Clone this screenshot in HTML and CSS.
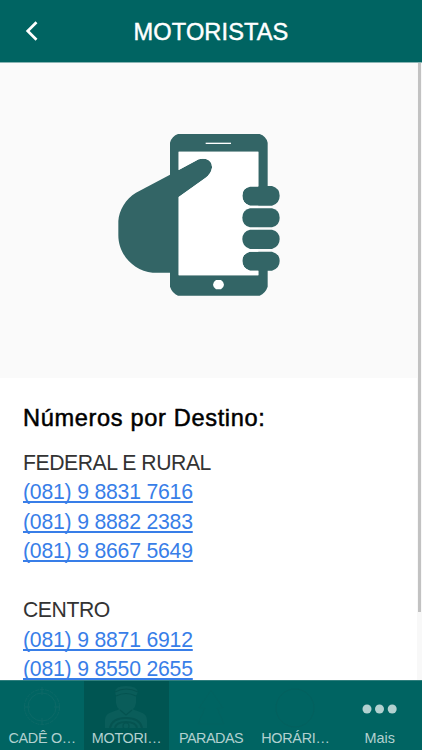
FILE: index.html
```html
<!DOCTYPE html>
<html lang="pt-BR">
<head>
<meta charset="utf-8">
<title>Motoristas</title>
<link rel="stylesheet" href="styles.css">
</head>
<body>
<div class="app">
  <header class="header">
    <svg class="back" width="14" height="22" viewBox="0 0 14 22"><path d="M11.5 2.2 2.7 11l8.8 8.8" fill="none" stroke="#fff" stroke-width="2.7"/></svg>
    <h1 class="title">MOTORISTAS</h1>
  </header>
  <main class="content">
    <div class="hero">
      <svg class="phone" width="180" height="180" viewBox="0 0 540 540">
        <path fill="#336566" d="M204 27H449Q468 33 473 53V183H486Q509 190 509 212Q509 235 486 242H420Q397 235 397 212Q397 190 420 183H445V80H206V135L266 103Q275 100 288 102Q307 108 306 128Q303 146 287 158L206 216V451H445V437H420Q397 430 397 408Q397 386 420 380H486Q509 386 509 408Q509 430 486 437H473V485Q466 505 449 512H204Q187 505 180 485V443H128C70 437 25 389 25 330V288C27 256 47 221 78 203L180 149V53Q186 33 204 27Z"/>
        <path fill="#fff" d="M206 80H445V185H420Q397 190 397 212Q397 235 420 242H445V250H420Q397 256 397 278Q397 301 420 307H445V314H420Q397 320 397 342Q397 365 420 372H445V380H420Q397 386 397 408Q397 430 420 437H445V451H206V216L287 158Q303 146 306 128Q307 108 288 102Q275 100 266 103L206 135Z"/>
        <g fill="#336566"><path d="M420 250H486Q509 256 509 278Q509 301 486 307H420Q397 301 397 278Q397 256 420 250Z"/><path d="M420 314H486Q509 320 509 342Q509 365 486 372H420Q397 365 397 342Q397 320 420 314Z"/></g>
        <path d="M287 55H363" stroke="#fff" stroke-width="4"/>
        <path fill="#fff" d="M318 465H333Q341 470 342 479 341 488 333 493H318Q310 488 309 479 310 470 318 465Z"/>
      </svg>
    </div>
    <section class="info">
      <h2 class="heading">Números por Destino:</h2>
      <div class="group">
        <p class="place federal">FEDERAL E RURAL</p>
        <a class="tel" href="tel:081988317616">(081) 9 8831 7616</a>
        <a class="tel" href="tel:081988822383">(081) 9 8882 2383</a>
        <a class="tel" href="tel:081986675649">(081) 9 8667 5649</a>
      </div>
      <div class="group">
        <p class="place">CENTRO</p>
        <a class="tel" href="tel:081988716912">(081) 9 8871 6912</a>
        <a class="tel" href="tel:081985502655">(081) 9 8550 2655</a>
      </div>
    </section>
    <div class="track"><div class="thumb"></div></div>
  </main>
  <nav class="tabs">
    <div class="tab">
      <svg class="icon" width="60" height="48" viewBox="0 0 60 48"><g fill="none" stroke="#0c6967" stroke-width="1"><circle cx="30" cy="27" r="17.5" stroke-dasharray="4 1"/><circle cx="30" cy="27" r="14"/><path d="M30 7v8M30 38v7M12 27h6M42 27h6"/></g></svg>
      <span class="label">CADÊ O…</span>
    </div>
    <div class="tab active">
      <svg class="icon" width="60" height="48" viewBox="0 0 60 48"><g fill="#0a5d5a"><path d="M18 12Q18 6 29 6T41 12L39 16V23Q38 31 29 31T19 23V16Z"/><path d="M8 48V40Q8 34 15 32L23 29H35L43 32Q50 34 50 40V48Z"/></g><g fill="none" stroke="#055350" stroke-width="1.2"><path d="M18 12Q29 6 41 12M19 16Q29 11 39 16M23 30l6 5 6-5"/><path stroke-width="2" d="M13 48Q15 38 29 38T45 48M18 48Q19 42 29 42T40 48"/><circle cx="29" cy="46" r="3"/></g></svg>
      <span class="label">MOTORI…</span>
    </div>
    <div class="tab">
      <svg class="icon" width="60" height="48" viewBox="0 0 60 48"><path d="M30 10 18 28h6l-7 16h26l-7-16h6Z" fill="none" stroke="#036260"/></svg>
      <span class="label paradas">PARADAS</span>
    </div>
    <div class="tab">
      <svg class="icon" width="60" height="48" viewBox="0 0 60 48"><circle cx="30" cy="28" r="19" fill="none" stroke="#04605e"/></svg>
      <span class="label">HORÁRI…</span>
    </div>
    <div class="tab">
      <svg class="icon" width="60" height="48" viewBox="0 0 60 48"><g fill="#b2d1d0"><circle cx="17" cy="29" r="4.5"/><circle cx="29.5" cy="29" r="4.5"/><circle cx="42.2" cy="29" r="4.5"/></g></svg>
      <span class="label mais">Mais</span>
    </div>
  </nav>
</div>
</body>
</html>
```
FILE: styles.css
```css
* { box-sizing: border-box; }
body { margin: 0; font-family: "Liberation Sans", Arial, sans-serif; background: #fff; }
h1, h2, p { margin: 0; font-weight: 400; }
.app { width: 422px; height: 750px; display: flex; flex-direction: column; overflow: hidden; }
.header { flex: none; height: 63px; background: #006462; display: grid; grid-template-columns: 60px 1fr 60px; align-items: center; border-bottom: 1px solid #8ab5b4; }
.back { margin-left: 25px; }
.title { color: #fff; font-size: 23.6px; line-height: 28px; text-align: center; letter-spacing: 0.1px; -webkit-text-stroke: 0.45px #fff; padding-top: 2px; }
.content { position: relative; flex: 1; min-height: 0; overflow: hidden; }
.hero { height: 315px; background: #fafafa; padding: 62px 0 0 110px; }
.phone { display: block; }
.info { padding: 25px 23px 0; }
.heading { font-size: 23.6px; line-height: 30px; color: #000; letter-spacing: 0.65px; -webkit-text-stroke: 0.5px #000; margin-bottom: 14.5px; white-space: nowrap; }
.group { display: flex; flex-direction: column; align-items: flex-start; font-size: 21.2px; line-height: 29.5px; margin-bottom: 29.5px; }
.place { color: #333; letter-spacing: -0.45px; }
.tel { color: #387ee8; letter-spacing: -0.2px; text-decoration: underline; text-decoration-thickness: 2px; text-underline-offset: 2px; text-decoration-skip-ink: none; }
.track { position: absolute; top: 0; right: 0; width: 5px; height: 100%; background: #f8f8f8; }
.thumb { width: 3px; height: 549px; margin-left: 1px; background: #c2c2c2; }
.tabs { flex: none; height: 70px; background: #006462; border-top: 1px solid #307f7d; display: grid; grid-template-columns: repeat(5, 1fr); }
.tab { display: flex; flex-direction: column; align-items: center; min-width: 0; }
.active { background: #005552; }
.icon { display: block; flex: none; margin-top: -1px; }
.label { font-size: 14.4px; line-height: 20px; color: #b2d1d0; white-space: nowrap; letter-spacing: -0.3px; }
.paradas { letter-spacing: -0.5px; }
.mais { letter-spacing: 0; }
```
